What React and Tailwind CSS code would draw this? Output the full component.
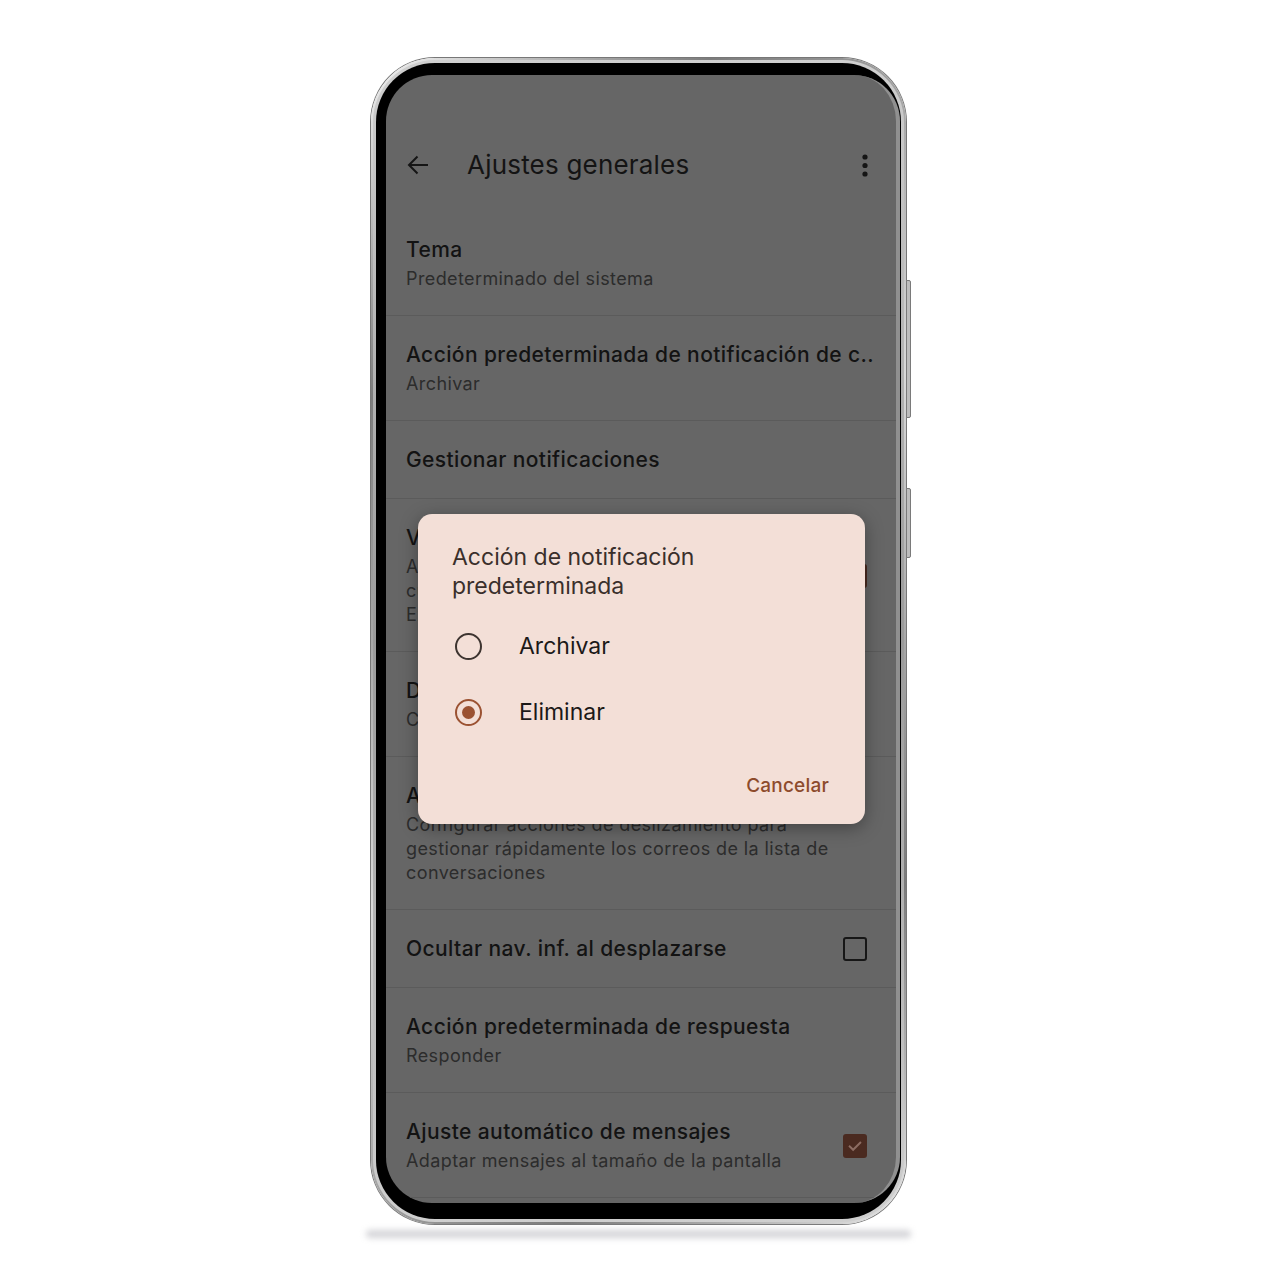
function Check({ checked }) {
  if (checked) {
    return (
      <div className="w-[24px] h-[24px] rounded-[3px] bg-[#4a2a20] flex items-center justify-center shrink-0">
        <svg width="18" height="18" viewBox="0 0 24 24">
          <path d="M5 12.5l4.5 4.5L19 7.5" fill="none" stroke="#8c6c62" strokeWidth="2.6" strokeLinecap="square" />
        </svg>
      </div>
    );
  }
  return <div className="w-[24px] h-[24px] rounded-[3px] border-[2.5px] border-[#161616] shrink-0" />;
}

function Row({ title, sub, check }) {
  return (
    <div className="flex items-center pl-[20px] pr-[29px] pt-[25px] pb-[24px] border-b border-[#5b5b5b]">
      <div className="flex-1 min-w-0">
        <div className="text-[21px] leading-[28px] tracking-[0.4px] font-medium text-[#131313] whitespace-nowrap">{title}</div>
        {sub && (
          <div className="mt-[3px] text-[18px] leading-[24px] tracking-[0.4px] text-[#2c2c2c]">
            {sub.map((l, i) => (
              <div key={i} className="whitespace-nowrap">{l}</div>
            ))}
          </div>
        )}
      </div>
      {check !== undefined && <Check checked={check} />}
    </div>
  );
}

export default function App() {
  return (
    <div className="w-[1280px] h-[1280px] bg-white flex flex-col items-start pl-[371px] pt-[58px] font-['Inter',sans-serif]">
      <div className="relative w-[535px] h-[1166px] rounded-[64px] p-[2px] bg-[linear-gradient(135deg,#f4f4f4,#7c7c7c_20%,#d9d9d9_50%,#7a7a7a_80%,#e8e8e8)] shadow-[0_0_0_1px_#777]">
        <div className="absolute right-[-5px] top-[222px] w-[5px] h-[138px] rounded-r-[2px] bg-[#bdbdbd] border border-[#7a7a7a]" />
        <div className="absolute right-[-5px] top-[430px] w-[5px] h-[70px] rounded-r-[2px] bg-[#bdbdbd] border border-[#7a7a7a]" />
        <div className="h-full w-full rounded-[62px] p-[3px] bg-[linear-gradient(180deg,#cfcfcf,#9a9a9a_50%,#cfcfcf)]">
          <div className="h-full w-full rounded-[59px] bg-black pl-[10px] pt-[12px] pr-[1px] pb-[16px]">
            <div className="relative h-full w-full rounded-[46px] overflow-hidden bg-[#666666] border-r-[4px] border-[#909090]">
              <div className="h-[136px] pt-[62px]">
                <div className="flex items-center h-[56px] pl-[21px] pr-[28px]">
                  <svg width="22" height="20" viewBox="0 0 22 20" className="shrink-0">
                    <path d="M21 10H2M10.5 1.5L2 10l8.5 8.5" fill="none" stroke="#151515" strokeWidth="2" />
                  </svg>
                  <div className="ml-[38px] flex-1 text-[26px] leading-[32px] tracking-[0.2px] text-[#141414]">Ajustes generales</div>
                  <svg width="6" height="24" viewBox="0 0 6 24">
                    <circle cx="3" cy="4" r="2.6" fill="#151515" />
                    <circle cx="3" cy="12.5" r="2.6" fill="#151515" />
                    <circle cx="3" cy="21" r="2.6" fill="#151515" />
                  </svg>
                </div>
              </div>
              <Row title="Tema" sub={["Predeterminado del sistema"]} />
              <Row title="Acción predeterminada de notificación de c.." sub={["Archivar"]} />
              <Row title="Gestionar notificaciones" />
              <Row
                title="Vista de conversación"
                sub={["Agrupar correos con el mismo asunto para", "cuentas IMAP, POP y", "Exchange"]}
                check={true}
              />
              <Row title="Densidad de la lista de conversaciones" sub={["Cómoda"]} />
              <Row
                title="Acciones al deslizar"
                sub={[
                  "Configurar acciones de deslizamiento para",
                  "gestionar rápidamente los correos de la lista de",
                  "conversaciones",
                ]}
              />
              <Row title="Ocultar nav. inf. al desplazarse" check={false} />
              <Row title="Acción predeterminada de respuesta" sub={["Responder"]} />
              <Row title="Ajuste automático de mensajes" sub={["Adaptar mensajes al tamaño de la pantalla"]} check={true} />

              <div className="absolute left-[32px] top-[439px] w-[447px] h-[310px] rounded-[14px] bg-[#f3dfd7] shadow-[0_4px_18px_rgba(0,0,0,0.35)] pl-[34px] pr-[36px] pt-[29px] flex flex-col">
                <div className="text-[23px] leading-[29px] text-[#3a2f2b]">
                  Acción de notificación
                  <br />
                  predeterminada
                </div>
                <div className="mt-[12px]">
                  <div className="flex items-center h-[66px]">
                    <div className="w-[32px] flex justify-center">
                      <div className="w-[27px] h-[27px] rounded-full border-[2.5px] border-[#3d3430]" />
                    </div>
                    <div className="ml-[35px] text-[23px] text-[#1c1918]">Archivar</div>
                  </div>
                  <div className="flex items-center h-[66px]">
                    <div className="w-[32px] flex justify-center">
                      <div className="w-[27px] h-[27px] rounded-full border-[2.7px] border-[#9b5232] flex items-center justify-center">
                        <div className="w-[13px] h-[13px] rounded-full bg-[#9b5232]" />
                      </div>
                    </div>
                    <div className="ml-[35px] text-[23px] text-[#1c1918]">Eliminar</div>
                  </div>
                </div>
                <div className="mt-[29px] flex justify-end text-[19px] leading-[24px] tracking-[0.2px] font-medium text-[#8d4b2c]">Cancelar</div>
              </div>
            </div>
          </div>
        </div>
      </div>
      <div className="mt-[6px] -ml-[5px] w-[545px] h-[8px] rounded-full bg-[#d4d4d8] blur-[3px]" />
    </div>
  );
}
